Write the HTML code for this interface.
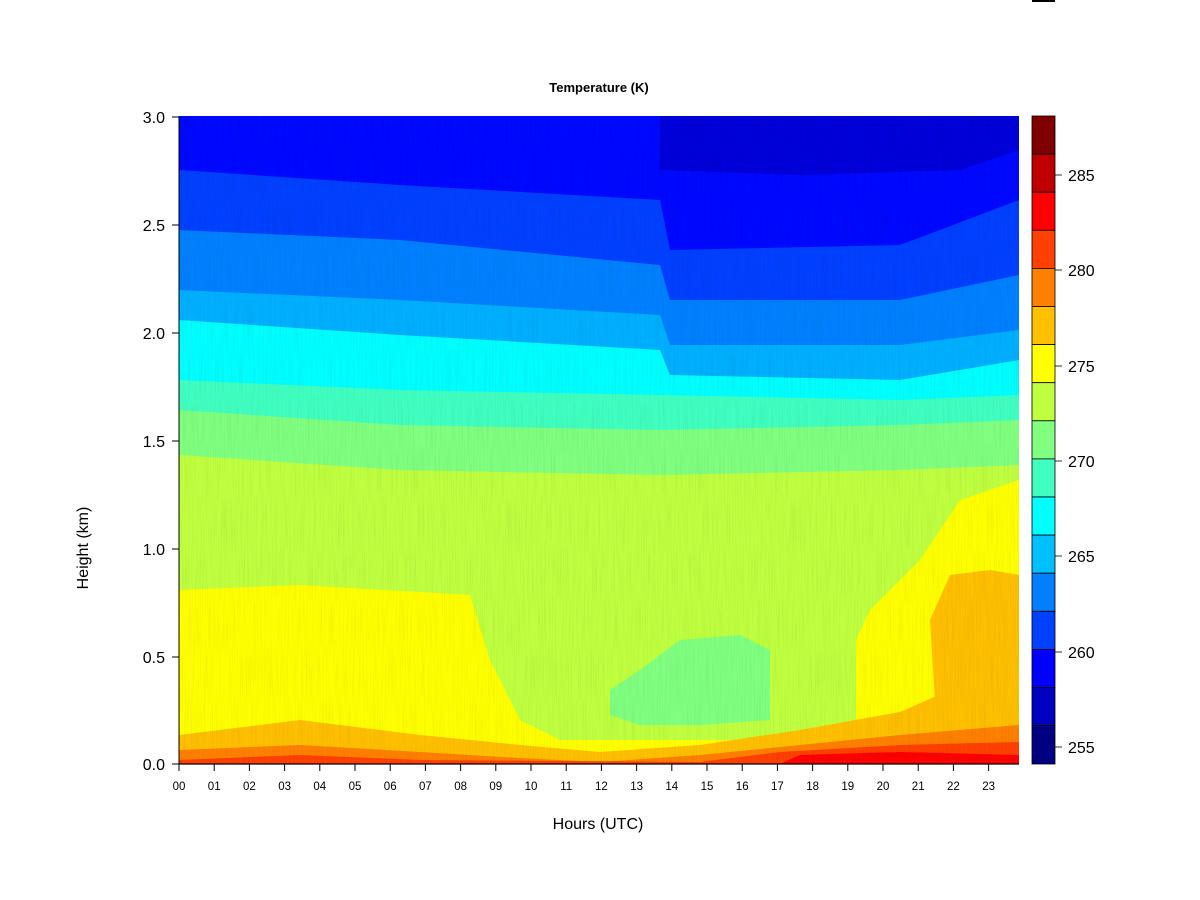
<!DOCTYPE html>
<html><head><meta charset="utf-8"><style>
html,body{margin:0;padding:0;background:#fff;width:1200px;height:900px;overflow:hidden}
svg{display:block}
text{font-family:"Liberation Sans",Arial,sans-serif;fill:#000}
</style></head><body>
<svg width="1200" height="900" viewBox="0 0 1200 900">
<rect x="1032" y="0" width="23" height="2" fill="#000"/>
<text x="599" y="92" font-size="13" font-weight="bold" text-anchor="middle">Temperature (K)</text>
<defs><clipPath id="c"><rect x="179" y="116" width="840" height="648"/></clipPath>
<filter id="n" x="0" y="0" width="1" height="1"><feTurbulence type="fractalNoise" baseFrequency="0.9 0.02" numOctaves="2" seed="3"/><feColorMatrix values="0 0 0 0 0  0 0 0 0 0  0 0 0 0 0  0 0 0 0.25 -0.1"/></filter></defs>
<g clip-path="url(#c)">
<rect x="179" y="116" width="840" height="648" fill="#0008FF"/>
<path d="M660,116 L1019,116 L1019,150 L960,170 L800,175 L660,170Z" fill="#0000DA"/>
<path d="M179,170 L400,185 L660,200 L670,250 L900,245 L1019,200 L1019,764 L179,764Z" fill="#0040FF"/>
<path d="M179,230 L400,240 L660,265 L670,300 L900,300 L1019,275 L1019,764 L179,764Z" fill="#0080FF"/>
<path d="M179,290 L400,300 L660,315 L670,345 L900,345 L1019,330 L1019,764 L179,764Z" fill="#00B0FF"/>
<path d="M179,320 L400,335 L660,350 L670,375 L900,380 L1019,360 L1019,764 L179,764Z" fill="#00FFFF"/>
<path d="M179,380 L400,390 L660,395 L900,400 L1019,395 L1019,764 L179,764Z" fill="#40FFC0"/>
<path d="M179,410 L400,425 L660,430 L900,425 L1019,420 L1019,764 L179,764Z" fill="#80FF80"/>
<path d="M179,455 L400,470 L660,475 L900,470 L1019,465 L1019,764 L179,764Z" fill="#C0FF40"/>
<path d="M179,590 L300,585 L470,595 L490,660 L520,720 L560,740 L1019,740 L1019,764 L179,764Z" fill="#FFFF00"/>
<path d="M856,764 L856,640 L870,610 L920,560 L960,500 L1019,480 L1019,764Z" fill="#FFFF00"/>
<path d="M610,690 L640,670 L680,640 L740,635 L770,650 L770,720 L700,725 L640,725 L610,715Z" fill="#80FF80"/>
<path d="M179,735 L300,720 L420,735 L520,745 L600,752 L700,745 L800,730 L900,712 L950,690 L1019,680 L1019,764 L179,764Z" fill="#FFC000"/>
<path d="M935,700 L930,620 L950,575 L990,570 L1019,575 L1019,764 L935,764Z" fill="#FFC000"/>
<path d="M179,750 L300,745 L420,752 L520,758 L600,762 L700,755 L800,745 L900,735 L1019,725 L1019,764 L179,764Z" fill="#FF8000"/>
<path d="M179,760 L300,755 L420,760 L700,762 L780,752 L900,745 L1019,742 L1019,764 L179,764Z" fill="#FF4000"/>
<path d="M780,764 L800,755 L900,752 L1019,755 L1019,764Z" fill="#FF0000"/>
<rect x="179" y="116" width="840" height="648" filter="url(#n)" opacity="0.5"/>
</g>
<line x1="179" y1="764" x2="1019" y2="764" stroke="#000" stroke-width="1.2"/>
<line x1="179" y1="116" x2="179" y2="764" stroke="#000" stroke-width="1"/>
<g stroke="#000" stroke-width="1">
<line x1="172" y1="117" x2="179" y2="117"/><line x1="172" y1="225" x2="179" y2="225"/><line x1="172" y1="333" x2="179" y2="333"/><line x1="172" y1="441" x2="179" y2="441"/><line x1="172" y1="549" x2="179" y2="549"/><line x1="172" y1="657" x2="179" y2="657"/><line x1="172" y1="764" x2="179" y2="764"/>
</g>
<g font-size="16" text-anchor="end">
<text x="165" y="123">3.0</text><text x="165" y="231">2.5</text><text x="165" y="339">2.0</text><text x="165" y="447">1.5</text><text x="165" y="555">1.0</text><text x="165" y="663">0.5</text><text x="165" y="770">0.0</text>
</g>
<g stroke="#000">
<line x1="179" y1="764" x2="179" y2="771"/><line x1="214.2" y1="764" x2="214.2" y2="771"/><line x1="249.4" y1="764" x2="249.4" y2="771"/><line x1="284.6" y1="764" x2="284.6" y2="771"/><line x1="319.8" y1="764" x2="319.8" y2="771"/><line x1="355" y1="764" x2="355" y2="771"/><line x1="390.2" y1="764" x2="390.2" y2="771"/><line x1="425.4" y1="764" x2="425.4" y2="771"/><line x1="460.6" y1="764" x2="460.6" y2="771"/><line x1="495.8" y1="764" x2="495.8" y2="771"/><line x1="531" y1="764" x2="531" y2="771"/><line x1="566.2" y1="764" x2="566.2" y2="771"/><line x1="601.4" y1="764" x2="601.4" y2="771"/><line x1="636.6" y1="764" x2="636.6" y2="771"/><line x1="671.8" y1="764" x2="671.8" y2="771"/><line x1="707" y1="764" x2="707" y2="771"/><line x1="742.2" y1="764" x2="742.2" y2="771"/><line x1="777.4" y1="764" x2="777.4" y2="771"/><line x1="812.6" y1="764" x2="812.6" y2="771"/><line x1="847.8" y1="764" x2="847.8" y2="771"/><line x1="883" y1="764" x2="883" y2="771"/><line x1="918.2" y1="764" x2="918.2" y2="771"/><line x1="953.4" y1="764" x2="953.4" y2="771"/><line x1="988.6" y1="764" x2="988.6" y2="771"/>
</g>
<g font-size="11.5" text-anchor="middle">
<text x="179" y="790">00</text><text x="214.2" y="790">01</text><text x="249.4" y="790">02</text><text x="284.6" y="790">03</text><text x="319.8" y="790">04</text><text x="355" y="790">05</text><text x="390.2" y="790">06</text><text x="425.4" y="790">07</text><text x="460.6" y="790">08</text><text x="495.8" y="790">09</text><text x="531" y="790">10</text><text x="566.2" y="790">11</text><text x="601.4" y="790">12</text><text x="636.6" y="790">13</text><text x="671.8" y="790">14</text><text x="707" y="790">15</text><text x="742.2" y="790">16</text><text x="777.4" y="790">17</text><text x="812.6" y="790">18</text><text x="847.8" y="790">19</text><text x="883" y="790">20</text><text x="918.2" y="790">21</text><text x="953.4" y="790">22</text><text x="988.6" y="790">23</text>
</g>
<text x="598" y="829" font-size="16" text-anchor="middle">Hours (UTC)</text>
<text transform="translate(88,548) rotate(-90)" font-size="16" text-anchor="middle">Height (km)</text>
<g stroke="#000" stroke-width="0.8">
<rect x="1032" y="116" width="23" height="38.1" fill="#800000"/>
<rect x="1032" y="154.1" width="23" height="38.1" fill="#C00000"/>
<rect x="1032" y="192.2" width="23" height="38.1" fill="#FF0000"/>
<rect x="1032" y="230.3" width="23" height="38.1" fill="#FF4000"/>
<rect x="1032" y="268.4" width="23" height="38.1" fill="#FF8000"/>
<rect x="1032" y="306.5" width="23" height="38.1" fill="#FFC000"/>
<rect x="1032" y="344.6" width="23" height="38.1" fill="#FFFF00"/>
<rect x="1032" y="382.7" width="23" height="38.1" fill="#C0FF40"/>
<rect x="1032" y="420.8" width="23" height="38.1" fill="#80FF80"/>
<rect x="1032" y="458.9" width="23" height="38.1" fill="#40FFC0"/>
<rect x="1032" y="497" width="23" height="38.1" fill="#00FFFF"/>
<rect x="1032" y="535.1" width="23" height="38.1" fill="#00C0FF"/>
<rect x="1032" y="573.2" width="23" height="38.1" fill="#0080FF"/>
<rect x="1032" y="611.3" width="23" height="38.1" fill="#0040FF"/>
<rect x="1032" y="649.4" width="23" height="38.1" fill="#0000FF"/>
<rect x="1032" y="687.5" width="23" height="38.1" fill="#0000C0"/>
<rect x="1032" y="725.6" width="23" height="38.4" fill="#000080"/>
<line x1="1055" y1="175" x2="1062" y2="175"/><line x1="1055" y1="270" x2="1062" y2="270"/><line x1="1055" y1="366" x2="1062" y2="366"/><line x1="1055" y1="461" x2="1062" y2="461"/><line x1="1055" y1="556" x2="1062" y2="556"/><line x1="1055" y1="652" x2="1062" y2="652"/><line x1="1055" y1="747" x2="1062" y2="747"/>
</g>
<g font-size="16">
<text x="1068" y="181">285</text><text x="1068" y="276">280</text><text x="1068" y="372">275</text><text x="1068" y="467">270</text><text x="1068" y="562">265</text><text x="1068" y="658">260</text><text x="1068" y="753">255</text>
</g>
</svg>
</body></html>
